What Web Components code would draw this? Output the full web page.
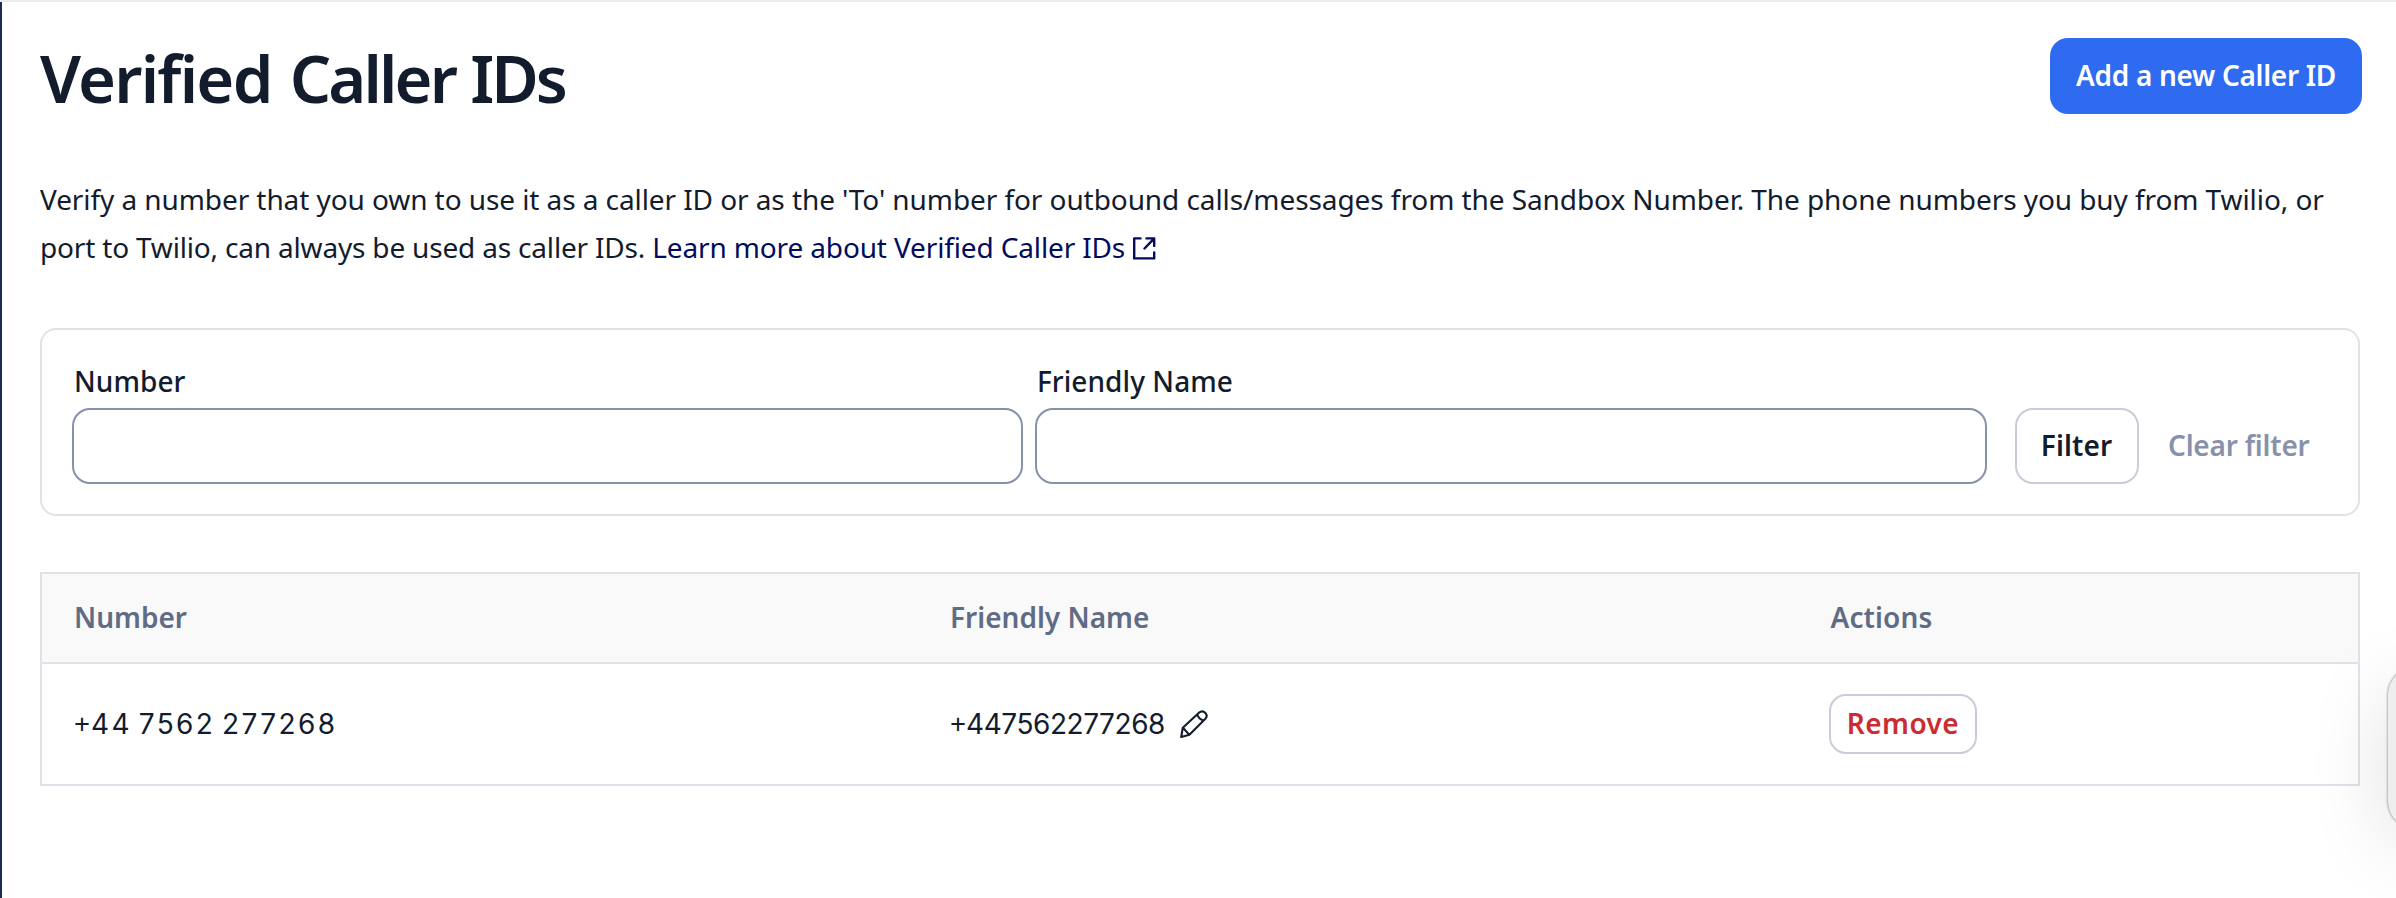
<!DOCTYPE html>
<html lang="en">
<head>
<meta charset="utf-8">
<title>Verified Caller IDs</title>
<style>
html, body { margin: 0; height: 100%; overflow: hidden; background: #fff; }
body { font: 400 28px/40px "Noto Sans", "Open Sans", sans-serif; color: #121c2d; }
</style>
</head>
<body>
<caller-page>
  <page-header><span style="letter-spacing:-1.75px;word-spacing:3px">Verified </span><span style="letter-spacing:-2.85px">Caller </span><span style="letter-spacing:-3px">IDs</span>
    <ui-button slot="action" variant="primary">Add a new Caller ID</ui-button>
  </page-header>
  <page-intro></page-intro>
  <filter-panel></filter-panel>
  <caller-table></caller-table>
</caller-page>
<side-bubble></side-bubble>
<script>
function define(name, html) {
  const template = document.createElement('template');
  template.innerHTML = '<style>*{box-sizing:border-box}</style>' + html;
  customElements.define(name, class extends HTMLElement {
    constructor() {
      super();
      this.attachShadow({ mode: 'open' }).append(template.content.cloneNode(true));
    }
  });
}

define('caller-page', `
<style>
:host { display: block; box-sizing: border-box; height: 898px; border-top: 2px solid #ebebf2; }
main { height: 896px; border-left: 2px solid #1c2b53; padding: 36px 36px 0 38px; }
</style>
<main><slot></slot></main>`);

define('page-header', `
<style>
:host { display: flex; justify-content: space-between; align-items: flex-start; height: 76px; margin-right: -2px; }
h1 { margin: 4px 0 0; font-size: 65px; line-height: 72px; font-weight: 630; letter-spacing: -2.35px; word-spacing: 1px; white-space: nowrap; }
</style>
<h1><slot></slot></h1><slot name="action"></slot>`);

define('ui-button', `
<style>
:host { display: flex; box-sizing: border-box; flex: none; align-items: center; justify-content: center; height: 76px; padding-bottom: 2px; border-radius: 18px; font-weight: 600; white-space: nowrap; }
:host([variant=primary]) { width: 312px; background: #2f6bf1; color: #fff; letter-spacing: -.3px; }
:host([variant=secondary]) { width: 124px; padding-right: 1px; border: 2px solid #cacdd8; letter-spacing: .1px; }
:host([variant=link]) { width: 189px; justify-content: flex-start; padding-left: 29px; color: #8891aa; letter-spacing: -.22px; }
:host([variant=danger]) { width: 148px; height: 60px; border-radius: 17px; border: 2px solid #cacdd8; color: #cb2c31; letter-spacing: .45px; }
</style>
<slot></slot>`);

define('page-intro', `
<style>
:host { display: block; margin-top: 61px; line-height: 48px; }
p { margin: 0; display: flex; align-items: center; height: 48px; white-space: pre; }
.one { letter-spacing: -.08px; }
.two { letter-spacing: -.18px; }
a { color: #030b5d; letter-spacing: -.14px; }
svg { margin: 1px 0 0 7px; }
</style>
<p class="one">Verify a number that you own to use it as a caller ID or as the 'To' number for outbound calls/messages from the Sandbox Number. The phone numbers you buy from Twilio, or</p>
<p class="two"><span>port to Twilio, can always be used as caller IDs. </span><a>Learn more about Verified Caller IDs</a><svg width="24" height="24" viewBox="0 0 24 24" fill="none" stroke="#030b5d" stroke-width="2.4" stroke-linecap="round" stroke-linejoin="round"><path d="M8.500 2.400H2.200v20h20V16.500M14.500 2.400h7.700v7.500M22 2.600L12.500 12.500"/></svg></p>`);

define('text-field', `
<style>
:host { display: block; flex: 1; }
label { display: block; height: 47px; margin-left: 2px; font-weight: 500; letter-spacing: .06px; }
input { display: block; width: 100%; height: 76px; margin: 0; padding: 0 22px; border: 2px solid #8891aa; border-radius: 18px; background: #fff; font: inherit; color: inherit; outline: 0; }
</style>
<label><slot></slot></label><input type="text">`);

define('filter-panel', `
<style>
:host { display: flex; box-sizing: border-box; align-items: flex-end; height: 188px; margin-top: 57px; padding: 0 30px 30px; border: 2px solid #e1e1e9; border-radius: 16px; }
text-field:first-of-type { flex: 0 0 951px; }
text-field + text-field { margin-left: 12px; }
ui-button[variant=secondary] { margin-left: 28px; }
</style>
<text-field>Number</text-field><text-field>Friendly Name</text-field>
<ui-button variant="secondary">Filter</ui-button><ui-button variant="link">Clear filter</ui-button>`);

define('edit-icon', `
<style>:host { display: block; width: 28px; height: 28px; }</style>
<svg width="28" height="28" viewBox="0 0 28 28" style="display:block" fill="none" stroke="#121c2d" stroke-width="2.1" stroke-linecap="round" stroke-linejoin="round"><path d="M2.800 17.800L19.200 2.600C21 1 23.400 1 25.200 2.800S27 7 25.400 8.800L9.400 24.800L1.200 27ZM3.400 18.200L9.200 24.600M17.200 4.600C18.600 8 20.400 9.600 23.400 10.600"/></svg>`);

define('caller-table', `
<style>
:host { display: block; box-sizing: border-box; height: 214px; margin-top: 56px; border: 2px solid #e1e1e9; }
.row { display: grid; grid-template-columns: 876px 879px 1fr; align-items: center; height: 120px; }
.row > * { margin-left: 32px; }
.head { height: 90px; padding-bottom: 2px; border-bottom: 2px solid #e1e1e9; background: #f9f9f9; color: #606b85; font-weight: 600; }
.head .actions { margin-left: 33.5px; letter-spacing: .1px; }
.num { font-family: Inter, "Noto Sans", sans-serif; white-space: nowrap; }
.plus { font-family: "Noto Sans", sans-serif; line-height: 1px; letter-spacing: 0; }
.spaced { letter-spacing: 2.4px; word-spacing: -3.6px; }
.spaced .plus { letter-spacing: 1px; }
.name { display: flex; align-items: center; gap: 15px; letter-spacing: -.45px; }
</style>
<div class="row head"><span>Number</span><span>Friendly Name</span><span class="actions">Actions</span></div>
<div class="row"><span class="num spaced"><span class="plus">+</span>44 7562 277268</span><span class="num name"><span><span class="plus">+</span>447562277268</span><edit-icon></edit-icon></span><ui-button variant="danger">Remove</ui-button></div>`);

define('side-bubble', `
<style>
:host { position: fixed; left: 2388px; top: 667px; width: 60px; height: 162px; border-radius: 28px; background: #eee; box-shadow: 0 0 3px rgba(0,0,0,.55), 0 18px 80px rgba(0,0,0,.13); }
</style>`);
</script>
</body>
</html>
